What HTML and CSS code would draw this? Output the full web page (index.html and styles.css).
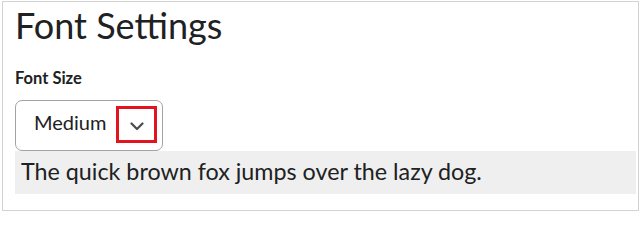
FILE: index.html
```html
<!DOCTYPE html>
<html lang="en">
<head>
<meta charset="utf-8">
<title>Font Settings</title>
<link rel="stylesheet" href="styles.css">
</head>
<body>
<div class="frame">
  <h1 class="title">Font Settings</h1>
  <div class="label">Font Size</div>
  <div class="select">
    <span class="select-value">Medium</span>
    <span class="select-toggle">
      <svg class="chevron" width="14" height="9" viewBox="0 0 14 9" aria-hidden="true">
        <path d="M1.5 1.5 L7 7 L12.5 1.5" fill="none" stroke="#494c4e" stroke-width="2.2" stroke-linecap="round" stroke-linejoin="round"/>
      </svg>
    </span>
  </div>
  <div class="sample">The quick brown fox jumps over the lazy dog.</div>
</div>
</body>
</html>
```
FILE: styles.css
```css
html, body {
  margin: 0;
  padding: 0;
  background: #ffffff;
}
body {
  font-family: Lato, "Noto Sans", sans-serif;
  color: #202122;
}
.frame {
  box-sizing: border-box;
  margin: 1px 0 0 2px;
  width: 637px;
  height: 210px;
  border: 1px solid #d3d3d3;
  padding: 1px 2px 0 12px;
}
.title {
  margin: 0;
  font-size: 36px;
  font-weight: 400;
  line-height: 44px;
}
.label {
  margin-top: 22px;
  font-size: 16.5px;
  font-weight: 700;
  line-height: 18px;
}
.select {
  box-sizing: border-box;
  margin-top: 13px;
  width: 148px;
  height: 51px;
  border: 1px solid #a3a3a3;
  border-radius: 7px;
  display: flex;
  align-items: center;
  padding-left: 18px;
}
.select-value {
  font-size: 20px;
  line-height: 24px;
  width: 82px;
  margin-bottom: 8px;
}
.select-toggle {
  box-sizing: border-box;
  width: 41px;
  height: 37px;
  margin-bottom: 3px;
  border: 3px solid #e4141e;
  display: flex;
  align-items: center;
  justify-content: center;
}
.chevron {
  display: block;
  margin-top: 4px;
}
.sample {
  background: #efefef;
  height: 43px;
  box-sizing: border-box;
  padding: 0 0 3px 6px;
  font-size: 23.3px;
  line-height: 40px;
}
```
